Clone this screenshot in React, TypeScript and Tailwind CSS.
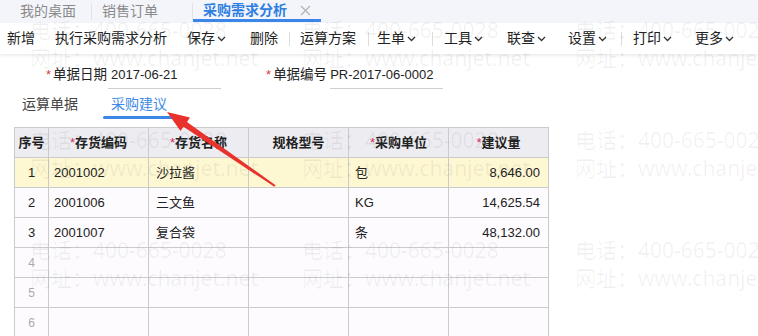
import React from 'react';

const toolbarItems: { label?: string; chevron?: boolean; sep?: boolean; ml: number }[] = [
  { label: '新增', ml: 7 },
  { label: '执行采购需求分析', ml: 20 },
  { label: '保存', chevron: true, ml: 20 },
  { label: '删除', ml: 24 },
  { sep: true, ml: 11 },
  { label: '运算方案', ml: 10 },
  { sep: true, ml: 12 },
  { label: '生单', chevron: true, ml: 8 },
  { sep: true, ml: 16 },
  { label: '工具', chevron: true, ml: 11 },
  { label: '联查', chevron: true, ml: 24 },
  { label: '设置', chevron: true, ml: 22 },
  { sep: true, ml: 14 },
  { label: '打印', chevron: true, ml: 11 },
  { label: '更多', chevron: true, ml: 23 },
];

const rows = [
  { no: 1, code: '2001002', name: '沙拉酱', unit: '包', qty: '8,646.00' },
  { no: 2, code: '2001006', name: '三文鱼', unit: 'KG', qty: '14,625.54' },
  { no: 3, code: '2001007', name: '复合袋', unit: '条', qty: '48,132.00' },
];

function Chevron() {
  return (
    <svg width="9" height="6" viewBox="0 0 9 6" className="ml-[2px] mt-[1px]">
      <path d="M1 1 L4.5 4.5 L8 1" fill="none" stroke="#333" strokeWidth="1.3" />
    </svg>
  );
}

function Cell({ children, className = '' }: { children?: React.ReactNode; className?: string }) {
  return (
    <div className={`h-[30px] border-r border-b border-[#cbcbcb] flex items-center ${className}`}>
      {children}
    </div>
  );
}

function Watermark() {
  const xs = [30, 302, 575];
  const ys = [16, 126, 236];
  return (
    <div className="absolute inset-0 pointer-events-none font-['Noto_Sans','Noto_Sans_CJK_SC',sans-serif] text-[21px] leading-[28px] text-[rgba(0,0,0,0.06)] whitespace-nowrap">
      {ys.map(y =>
        xs.map(x => (
          <div key={`${x}-${y}`} className="absolute" style={{ left: x, top: y }}>
            <div>电话：400-665-0028</div>
            <div>网址：www.chanjet.net</div>
          </div>
        ))
      )}
    </div>
  );
}

export default function App() {
  return (
    <div className="relative w-[758px] h-[336px] overflow-hidden bg-white font-['Liberation_Sans','Noto_Sans_CJK_SC',sans-serif] text-[#222]">
      {/* top tab bar */}
      <div className="h-[23px] bg-[#f4f5fb] flex items-stretch text-[14px] leading-[20px]">
        <div className="w-[91px] pl-[20px] pb-[2px] text-[#8a8a8a] flex items-center">我的桌面</div>
        <div className="w-px my-[3px] bg-[#e2e3ea]" />
        <div className="w-[100px] pl-[10px] pb-[2px] text-[#8a8a8a] flex items-center">销售订单</div>
        <div className="w-px my-[3px] bg-[#e2e3ea]" />
        <div className="w-[128px] relative flex items-center pl-[10px] pb-[3px]">
          <span className="text-[#2f7fe3] font-semibold">采购需求分析</span>
          <svg width="11" height="11" viewBox="0 0 11 11" className="ml-[13px]">
            <path d="M1 1 L10 10 M10 1 L1 10" stroke="#b0b0b0" strokeWidth="1.1" />
          </svg>
          <div className="absolute left-0 right-0 bottom-[1px] h-[3px] bg-[#3b86e6]" />
        </div>
      </div>

      {/* toolbar */}
      <div className="h-[31px] bg-white flex items-center text-[14px] shadow-[0_2px_3px_rgba(0,0,0,0.08)] relative">
        {toolbarItems.map((it, i) =>
          it.sep ? (
            <div key={i} className="w-px h-[14px] bg-[#dcdcdc]" style={{ marginLeft: it.ml }} />
          ) : (
            <div key={i} className="flex items-center" style={{ marginLeft: it.ml }}>
              <span>{it.label}</span>
              {it.chevron && <Chevron />}
            </div>
          )
        )}
      </div>

      {/* form fields */}
      <div className="mt-[7px] h-[28px] flex items-stretch text-[13px]">
        <div className="ml-[46px] flex items-center">
          <span className="text-[#e03a3a] mr-[2px]">*</span>
          <span className="text-[13.5px]">单据日期</span>
        </div>
        <div className="ml-[1px] w-[113px] border-b border-[#cfcfcf] flex items-center pl-[3px]">2017-06-21</div>
        <div className="ml-[45px] flex items-center">
          <span className="text-[#e03a3a] mr-[2px]">*</span>
          <span className="text-[13.5px]">单据编号</span>
        </div>
        <div className="ml-[3px] w-[113px] border-b border-[#cfcfcf] flex items-center">PR-2017-06-0002</div>
      </div>

      {/* sub tabs */}
      <div className="flex text-[14px] leading-[16px]">
        <div className="ml-[22px] pt-[7px] text-[#444]">运算单据</div>
        <div className="ml-[25px] flex flex-col">
          <div className="pt-[7px] px-[8px] text-[#3b8be6]">采购建议</div>
          <div className="mt-[4px] h-[3px] bg-[#3b86e6] rounded-full" />
        </div>
      </div>

      {/* table */}
      <div className="ml-[14px] mt-[8px] w-[535px] border-l border-t border-[#cbcbcb] grid grid-cols-[34px_100px_100px_100px_100px_100px] text-[13px]">
        <Cell className="bg-[#ececf1] justify-center font-bold">序号</Cell>
        <Cell className="bg-[#ececf1] justify-center font-bold"><span className="text-[#d0306a] font-normal">*</span>存货编码</Cell>
        <Cell className="bg-[#ececf1] justify-center font-bold"><span className="text-[#d0306a] font-normal">*</span>存货名称</Cell>
        <Cell className="bg-[#ececf1] justify-center font-bold">规格型号</Cell>
        <Cell className="bg-[#ececf1] justify-center font-bold"><span className="text-[#d0306a] font-normal">*</span>采购单位</Cell>
        <Cell className="bg-[#ececf1] justify-center font-bold"><span className="text-[#d0306a] font-normal">*</span>建议量</Cell>
        {rows.map((r, i) => {
          const bg = i === 0 ? 'bg-[#fdf7d2]' : 'bg-[#fdfbfe]';
          return (
            <React.Fragment key={r.no}>
              <Cell className={`${bg} justify-center`}>{r.no}</Cell>
              <Cell className={`${bg} pl-[5px]`}>{r.code}</Cell>
              <Cell className={`${bg} pl-[7px]`}>{r.name}</Cell>
              <Cell className={bg} />
              <Cell className={`${bg} pl-[6px]`}>{r.unit}</Cell>
              <Cell className={`${bg} justify-end pr-[8px]`}>{r.qty}</Cell>
            </React.Fragment>
          );
        })}
        {[4, 5, 6].map(n => (
          <React.Fragment key={n}>
            <Cell className="bg-[#fdfbfe] justify-center text-[#aaaaaa] text-[12px]">{n}</Cell>
            <Cell className="bg-[#fdfbfe]" />
            <Cell className="bg-[#fdfbfe]" />
            <Cell className="bg-[#fdfbfe]" />
            <Cell className="bg-[#fdfbfe]" />
            <Cell className="bg-[#fdfbfe]" />
          </React.Fragment>
        ))}
      </div>

      <Watermark />

      {/* red annotation arrow */}
      <svg className="absolute left-0 top-0 pointer-events-none" width="758" height="336" viewBox="0 0 758 336">
        <polygon
          points="167,112 190,117.5 187,122 275.6,185.2 274.4,186.8 183.5,126.8 180.5,131"
          fill="#e9322b"
        />
      </svg>
    </div>
  );
}
